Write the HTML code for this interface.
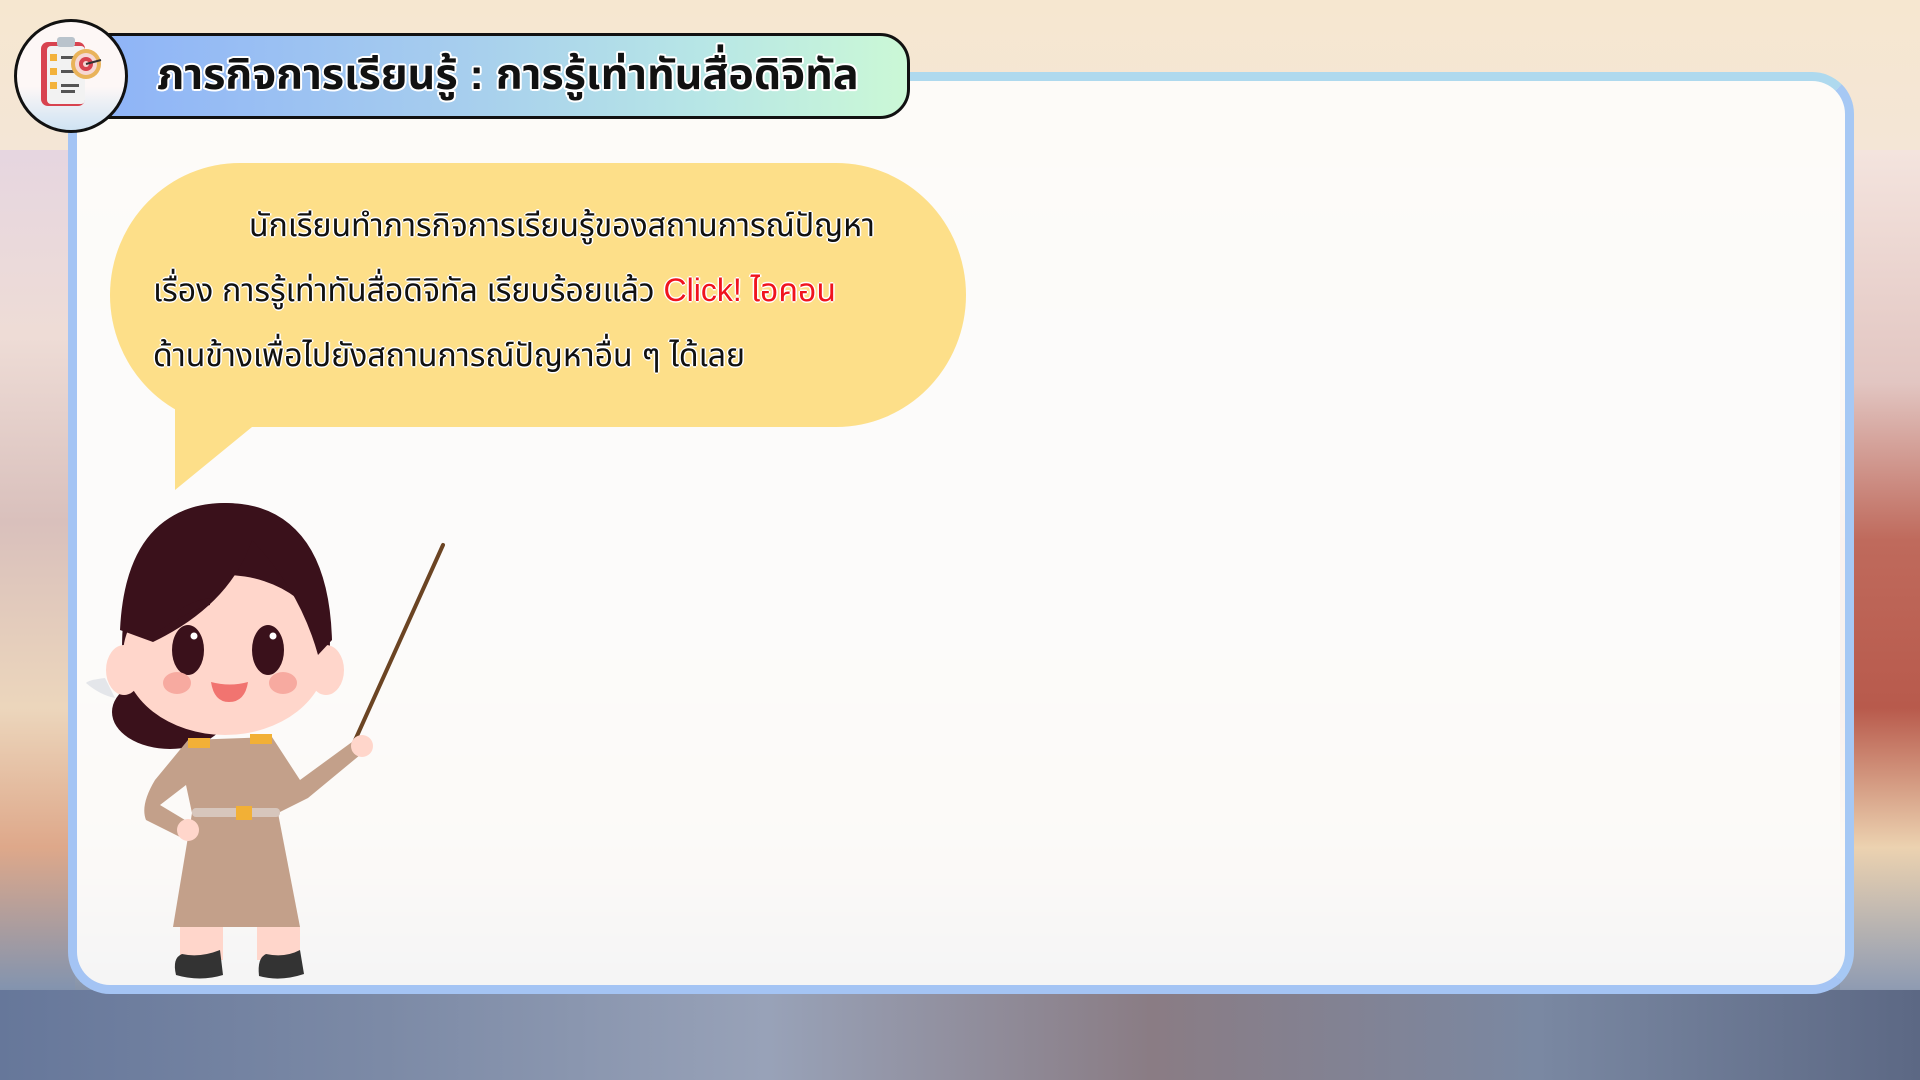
<!DOCTYPE html>
<html><head><meta charset="utf-8">
<style>
html,body{margin:0;padding:0}
body{width:1920px;height:1080px;position:relative;overflow:hidden;font-family:"Liberation Sans","Noto Sans Thai","Tlwg Typist",sans-serif;
background:linear-gradient(180deg,#f6e7d0 0%,#f4e6d6 14%,#efe9ec 35%,#f0ebe7 60%,#e3d6c8 80%,#8391a8 92%,#5e6a84 100%);}
.bgl{position:absolute;left:0;top:150px;width:75px;height:930px;background:linear-gradient(180deg,#e6d6e0 0%,#eedcd6 20%,#d9c0bc 40%,#ecd6bc 60%,#dea88a 75%,#8494ae 90%,#5a6782 100%)}
.bgr{position:absolute;right:0;top:150px;width:80px;height:930px;background:linear-gradient(180deg,#f4e4de 0%,#e2c6c2 25%,#bf6a5c 42%,#b85a4c 60%,#ecd2b0 75%,#909cb2 90%,#5a6680 100%)}
.bgb{position:absolute;left:0;top:990px;width:1920px;height:90px;background:linear-gradient(90deg,#66779a,#7c8aa6 20%,#98a2b8 40%,#8a7c84 60%,#7a88a2 80%,#5c6884)}
.panel{position:absolute;left:68px;top:72px;width:1786px;height:922px;box-sizing:border-box;border:9px solid #a4c4f4;border-radius:42px;background:rgba(253,252,251,0.93);
border-top-color:#aed9ee;border-right-color:#a6c8f4}
.pill{position:absolute;left:78px;top:33px;width:832px;height:86px;box-sizing:border-box;border:3px solid #111;border-radius:30px;
background:linear-gradient(90deg,#8db2f8 0%,#a6cdee 45%,#b7e6e6 75%,#cbf8d6 100%)}
.title{position:absolute;left:157px;top:44px;font-size:43px;font-weight:bold;color:#111;white-space:nowrap;
text-shadow:2px 0 #fff,-2px 0 #fff,0 2px #fff,0 -2px #fff,1.5px 1.5px #fff,-1.5px -1.5px #fff,1.5px -1.5px #fff,-1.5px 1.5px #fff;}
.circ{position:absolute;left:14px;top:19px;width:114px;height:114px;box-sizing:border-box;border:3px solid #111;border-radius:50%;
background:linear-gradient(180deg,#fdf7f6 60%,#cfe3f3 100%)}
.bubble{position:absolute;left:110px;top:163px;width:856px;height:264px;background:#fddf89;border-radius:130px/132px}
.txt{position:absolute;left:153px;top:193px;font-size:32px;color:#111;line-height:65px;white-space:nowrap;
text-shadow:1.5px 0 #fff,-1.5px 0 #fff,0 1.5px #fff,0 -1.5px #fff}
.red{color:#f0141e}
</style></head><body>
<div class="bgl"></div><div class="bgr"></div><div class="bgb"></div>
<div class="panel"></div>
<div class="pill"></div>
<div class="title">ภารกิจการเรียนรู้ : การรู้เท่าทันสื่อดิจิทัล</div>
<div class="circ">
<svg width="108" height="108" viewBox="0 0 108 108" style="position:absolute;left:0;top:0">
<rect x="24" y="20" width="44" height="64" rx="7" fill="#d8434f"/>
<rect x="30" y="24" width="38" height="58" rx="4" fill="#f2f2f2"/>
<rect x="40" y="15" width="18" height="10" rx="3" fill="#b9c3cc"/>
<rect x="33" y="32" width="7" height="7" fill="#f3b23b"/><rect x="33" y="46" width="7" height="7" fill="#f3b23b"/><rect x="33" y="60" width="7" height="7" fill="#f3b23b"/>
<rect x="44" y="34" width="14" height="3" fill="#555"/><rect x="44" y="48" width="14" height="3" fill="#555"/><rect x="44" y="62" width="18" height="3" fill="#555"/><rect x="44" y="68" width="14" height="3" fill="#555"/>
<circle cx="69" cy="42" r="15" fill="#e9b35a"/><circle cx="69" cy="42" r="11" fill="#f6d7d4"/><circle cx="69" cy="42" r="7" fill="#d8434f"/><circle cx="69" cy="42" r="3" fill="#f6d7d4"/>
<line x1="69" y1="42" x2="84" y2="38" stroke="#333" stroke-width="2"/>
</svg></div>
<div class="bubble"></div>
<svg width="120" height="120" style="position:absolute;left:170px;top:380px"><polygon points="5,0 5,110 82,47 60,0" fill="#fddf89"/></svg>
<div class="txt"><span style="padding-left:96px">นักเรียนทำภารกิจการเรียนรู้ของสถานการณ์ปัญหา</span><br>เรื่อง การรู้เท่าทันสื่อดิจิทัล เรียบร้อยแล้ว <span class="red">Click! ไอคอน</span><br>ด้านข้างเพื่อไปยังสถานการณ์ปัญหาอื่น ๆ ได้เลย</div>
<svg width="420" height="520" viewBox="0 0 420 520" style="position:absolute;left:60px;top:480px">
<line x1="383" y1="65" x2="292" y2="267" stroke="#6b4423" stroke-width="4" stroke-linecap="round"/>
<path d="M45 198 Q28 200 26 203 Q40 215 55 218 Z" fill="#e4e6ea"/>
<path d="M62 170 Q62 23 165 23 Q270 23 270 170 L262 200 L70 200 Z" fill="#3a111b"/>
<ellipse cx="110" cy="232" rx="58" ry="37" fill="#3a111b"/>
<rect x="120" y="447" width="43" height="33" fill="#ffd6cb"/><rect x="197" y="447" width="43" height="33" fill="#ffd6cb"/>
<path d="M116 495 Q112 478 122 474 Q140 478 160 470 L163 495 Q140 502 116 495Z" fill="#333"/>
<path d="M199 496 Q197 478 206 474 Q225 478 240 470 L244 494 Q220 502 199 496Z" fill="#333"/>
<path d="M128 260 L212 257 L240 300 L292 262 L300 275 L248 318 L218 333 L132 333 L126 305 L100 325 L130 343 L122 358 L86 340 Q80 325 95 300 Z" fill="#c3a08a"/>
<path d="M132 333 L218 333 L240 447 L113 447 Z" fill="#c3a08a"/>
<rect x="132" y="328" width="88" height="9" rx="4" fill="#d7c6bc"/><rect x="176" y="326" width="16" height="14" fill="#f2b036"/>
<rect x="128" y="258" width="22" height="10" fill="#f2b036"/><rect x="190" y="254" width="22" height="10" fill="#f2b036"/>
<circle cx="302" cy="266" r="11" fill="#ffd6cb"/>
<circle cx="128" cy="350" r="11" fill="#ffd6cb"/>
<ellipse cx="165" cy="175" rx="102" ry="80" fill="#ffd6cb"/>
<ellipse cx="64" cy="190" rx="18" ry="25" fill="#ffd6cb"/><ellipse cx="266" cy="190" rx="18" ry="25" fill="#ffd6cb"/>
<path d="M60 150 Q66 25 165 23 Q268 25 272 160 L258 175 Q240 110 192 60 Q170 125 93 162 Z" fill="#3a111b"/>
<path d="M150 118 Q120 122 100 150 Q130 130 150 125Z" fill="#3a111b"/>
<ellipse cx="128" cy="170" rx="16" ry="25" fill="#3a111b"/><ellipse cx="208" cy="170" rx="16" ry="25" fill="#3a111b"/>
<circle cx="134" cy="156" r="3.5" fill="#fff"/><circle cx="213" cy="156" r="3.5" fill="#fff"/>
<ellipse cx="117" cy="203" rx="14" ry="11" fill="#f7aaa0"/><ellipse cx="223" cy="203" rx="14" ry="11" fill="#f7aaa0"/>
<path d="M151 202 Q170 207 188 202 Q185 222 169 222 Q154 222 151 202Z" fill="#f17470"/>
</svg>
</body></html>
